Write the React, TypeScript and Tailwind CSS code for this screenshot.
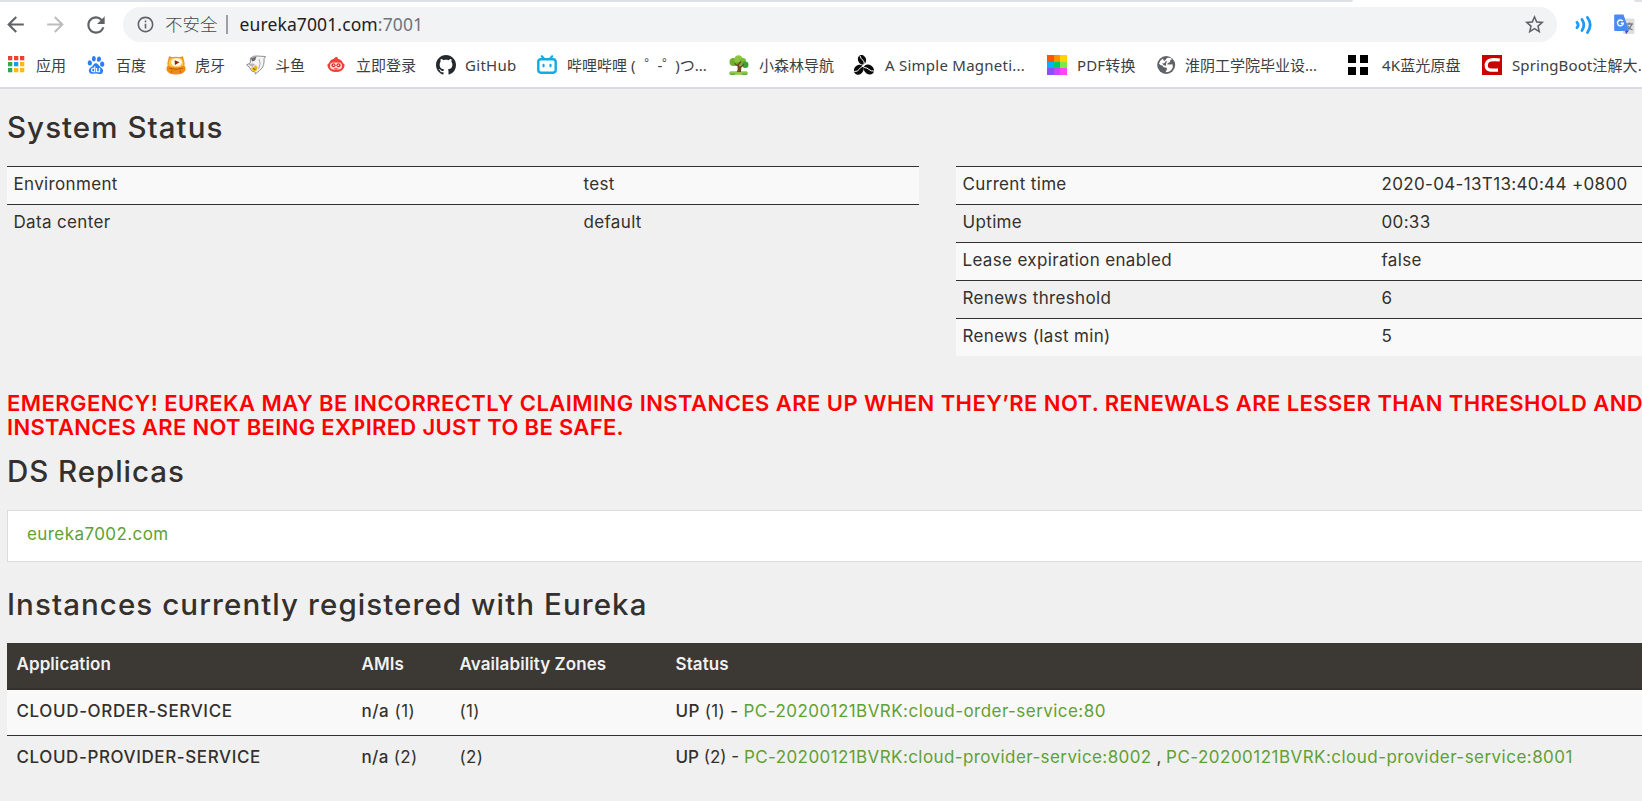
import type { ReactNode } from "react";
import { MdArrowBack, MdArrowForward, MdInfoOutline, MdRefresh, MdStarBorder } from "react-icons/md";
import { SiBaidu } from "react-icons/si";

const AppsIcon = () => (
  <svg viewBox="0 0 20 20" className="h-5 w-5">
    {[
      [2, 1, "#ea4335"], [8, 1, "#ea4335"], [14, 1, "#ea4335"],
      [2, 7, "#34a853"], [8, 7, "#2196f3"], [14, 7, "#fbbc05"],
      [2, 13, "#34a853"], [8, 13, "#fbbc05"], [14, 13, "#fbbc05"],
    ].map(([x, y, c]) => (
      <rect key={`${x}-${y}`} x={x} y={y} width="4.3" height="4.3" fill={c as string} />
    ))}
  </svg>
);

const TigerIcon = () => (
  <svg viewBox="0 0 20 20" className="h-5 w-5">
    <path d="M3 1.200 6.500 2.300Q10 1.400 13.500 2.300L17 1.200 17.800 5Q19 8 18.300 10.500 20.500 13 19 16 16.500 19.600 10 19.600T1 16Q-.5 13 1.700 10.500 1 8 2.200 5Z" fill="#f08c14" />
    <path d="M4 3.500Q10 1.800 16 3.500 18 7 17.500 10.500 14 12.600 10 12.600T2.500 10.500Q2 7 4 3.500Z" fill="#ffc34a" />
    <ellipse cx="10.500" cy="7.300" rx="5.500" ry="4" fill="#fff7ea" />
    <path d="M8.600 5.200 13.500 7.300 9 10Z" fill="#7a2f10" />
    <path d="M3 13.200Q10 15.500 17 13.200M5 17.800 6 15.500M15 17.800 14 15.500" stroke="#b85a0c" strokeWidth="1" fill="none" />
  </svg>
);

const SharkIcon = () => (
  <svg viewBox="0 0 20 20" className="h-5 w-5">
    <path d="M4.500 3Q7 .6 11 1L19.500 1.500Q17.500 3 18 7 17.800 12.500 13.500 15.500L9.500 19 9 16.800Q4 16.500 4.200 13L.6 9.800 4.300 8Z" fill="#f4f4f4" stroke="#828282" strokeWidth=".9" />
    <path d="M5 3.200 10.500 1.500 9 5.500 6 6.500Z" fill="#6d6570" />
    <path d="M2 9.700 6.500 8.300 9 9.500 6.500 12Z" fill="#b9b2bc" />
    <path d="M5 13Q8.500 12.500 9.800 9.800L11.500 12.500Q11.500 16 8.500 16.400 5.500 16 5 13Z" fill="#edb90c" />
    <path d="M7 13.500 9.500 14.500" stroke="#7c5a10" strokeWidth="1" />
    <path d="M13 4Q15.500 9 12.500 14" stroke="#9a9a9a" strokeWidth=".8" fill="none" />
  </svg>
);

const RobotIcon = () => (
  <svg viewBox="0 0 20 20" className="h-5 w-5">
    <path d="M7.500 3.900Q9 1.500 11.500 2 11 3 12.300 3.900 16 4.800 17 8.200 19.300 9 18.200 12 16.500 17 10 17T1.800 12Q.7 9 3 8.200 4 4.800 7.500 3.900Z" fill="#ef4136" />
    <rect x="4" y="7.600" width="12" height="6.800" rx="3.400" fill="#fbd9d5" />
    <circle cx="7.500" cy="10.300" r="2" fill="#d9372c" />
    <circle cx="12.500" cy="10.300" r="2" fill="#d9372c" />
    <circle cx="7.700" cy="10.300" r=".7" fill="#fff" />
    <circle cx="12.300" cy="10.300" r=".7" fill="#fff" />
    <path d="M8.300 13.700H11.700" stroke="#ef4136" />
  </svg>
);

const GithubIcon = () => (
  <svg viewBox="0 0 16 16" className="h-5 w-5" fill="#24292e">
    <path d="M8 0C3.580 0 0 3.580 0 8c0 3.540 2.290 6.530 5.470 7.590.4.070.55-.17.55-.38 0-.19-.01-.82-.01-1.490-2.010.37-2.530-.49-2.690-.94-.09-.23-.48-.94-.82-1.130-.28-.15-.68-.52-.01-.53.63-.01 1.080.58 1.230.82.72 1.210 1.870.87 2.330.66.070-.52.28-.87.51-1.070-1.780-.2-3.640-.89-3.640-3.950 0-.87.31-1.590.82-2.150-.08-.2-.36-1.020.08-2.120 0 0 .67-.21 2.200.82.64-.18 1.320-.27 2-.27.68 0 1.360.09 2 .27 1.530-1.040 2.200-.82 2.200-.82.44 1.100.16 1.920.08 2.120.51.56.82 1.270.82 2.150 0 3.070-1.870 3.750-3.650 3.950.29.25.54.73.54 1.480 0 1.070-.01 1.930-.01 2.200 0 .21.15.46.55.38A8.010 8.010 0 0 0 16 8c0-4.420-3.580-8-8-8z" />
  </svg>
);

const TvIcon = () => (
  <svg viewBox="0 0 20 20" className="h-5 w-5" fill="none" stroke="#0fabe4" strokeLinecap="round">
    <path d="M4.800 1.200 7.300 4M15.200 1.200 12.700 4" strokeWidth="2.100" />
    <rect x="1.300" y="4.300" width="17.400" height="13.400" rx="2.600" strokeWidth="2.400" />
    <path d="M6.500 9.800V11.300M13.500 9.800V11.300" strokeWidth="2.200" />
  </svg>
);

const TreeIcon = () => (
  <svg viewBox="0 0 20 20" className="h-5 w-5">
    <rect x=".3" y="16.300" width="18.500" height="3.400" rx="1.500" fill="#8ccb3f" />
    <path d="M1 19.200H6M13 19.200H18" stroke="#3f9a45" strokeWidth="1" />
    <circle cx="4.500" cy="7" r="4" fill="#6fb02c" />
    <circle cx="9.500" cy="4.500" r="4.200" fill="#8cc63f" />
    <circle cx="14" cy="6" r="3" fill="#79b935" />
    <circle cx="16.300" cy="9.800" r="3.200" fill="#3f9f3c" />
    <ellipse cx="9" cy="9" rx="4.200" ry="2" fill="#74ad30" />
    <path d="M7.800 17Q9.500 14 8.300 10L10.500 11.500 13.500 10.500Q11.500 13 12 17Z" fill="#7a4a25" />
    <path d="M9.500 15V8.500M9.500 11 5.500 8.500M10.500 12.500 15 9.500M9.800 9 12 6.500" stroke="#74421f" strokeWidth="1.200" fill="none" />
  </svg>
);

const BeansIcon = () => (
  <svg viewBox="0 0 20 20" className="h-5 w-5">
    <g fill="#0a0a0a">
      <ellipse cx="8" cy="4.700" rx="4" ry="4.900" transform="rotate(-20 8 4.700)" />
      <ellipse cx="4.800" cy="14.700" rx="5.400" ry="4.500" transform="rotate(-50 4.800 14.700)" />
      <ellipse cx="14.800" cy="14.500" rx="5.600" ry="4.500" transform="rotate(35 14.800 14.500)" />
    </g>
    <path d="M5.800.5Q7 4 8.800 5.200T10.200 9.500M.3 16.500Q4 16.500 5 14.500T9.200 11M10.200 12.500Q13 12.500 15 14.500T20 16" stroke="#fff" strokeWidth="1" fill="none" />
  </svg>
);

const PaletteIcon = () => (
  <svg viewBox="0 0 20 20" className="h-5 w-5" shapeRendering="crispEdges">
    {["#ff5500", "#ff9100", "#ffd400", "#00b4ff", "#00cc66", "#80e650", "#8a4dff", "#cc44ff", "#ff44ff"].map((c, i) => (
      <rect key={c} x={[0, 7, 13][i % 3]} y={[0, 7, 13][Math.floor(i / 3)]} width="7" height="7" fill={c} />
    ))}
  </svg>
);

const GlobeIcon = () => (
  <svg viewBox="0 0 20 20" className="h-5 w-5">
    <circle cx="9.200" cy="10" r="9" fill="#5f6368" />
    <path
      d="M10 3Q13 2.300 15 4 12.500 5.300 12.800 7.300 10 7.800 10.300 9.500 12.500 9.800 15.500 9.300 16.300 11.500 15 14 12.500 17.300 9 17.300 8.300 16 9.800 15 10.800 13.300 8.800 12.600 6 12.800 5.300 10.500 3.500 10.300 2 8.800 3 5.300 6 3.500 5.800 5.800 8 5.800 9 4.300 10 3Z"
      fill="#fff"
    />
    <path d="M5 8.300Q8 9 8.300 6.500L10.500 6.300Q8.300 8 9.300 10.800 6.500 11 5 8.300Z" fill="#5f6368" />
  </svg>
);

const SquaresIcon = () => (
  <svg viewBox="0 0 20 20" className="h-5 w-5" shapeRendering="crispEdges">
    <path d="M0 0H8V8H0ZM12 0H20V8H12ZM0 12H8V20H0ZM12 12H20V20H12Z" />
  </svg>
);

const RedCIcon = () => (
  <svg viewBox="0 0 20 20" className="h-5 w-5">
    <rect width="20" height="20" fill="#c90000" />
    <path d="M17.800 5Q13 4.300 9.500 4.800 4.500 5.700 4.200 10.300 4.200 15 9 15.200H16" stroke="#fff" strokeWidth="3.200" fill="none" />
  </svg>
);

type Bookmark = { id: string; label?: ReactNode; icon: ReactNode; width: string; gap?: string; track?: string };

const bookmarks: Bookmark[] = [
  { id: "应用", icon: <AppsIcon />, width: "w-[80px]" },
  { id: "百度", icon: <SiBaidu className="mx-[1px] h-[18px] w-[18px] text-[#2f7df6]" />, width: "w-[80px]" },
  { id: "虎牙", icon: <TigerIcon />, width: "w-[80px]", gap: "gap-[9px]" },
  { id: "斗鱼", icon: <SharkIcon />, width: "w-[80px]", gap: "gap-[9px]" },
  { id: "立即登录", icon: <RobotIcon />, width: "w-[110px]" },
  { id: "GitHub", icon: <GithubIcon />, width: "w-[101px]", gap: "gap-[9px]", track: "tracking-[0.3px]" },
  {
    id: "哔哩哔哩",
    label: (
      <>
        哔哩哔哩 (<span className="pl-[9px] tracking-[-2px]">゜- ゜</span>)つ...
      </>
    ),
    icon: <TvIcon />,
    width: "w-[192px]",
  },
  { id: "小森林导航", icon: <TreeIcon />, width: "w-[125px]" },
  { id: "A Simple Magneti...", icon: <BeansIcon />, width: "w-[193px]", gap: "gap-[11px]", track: "tracking-[0.25px]" },
  { id: "PDF转换", icon: <PaletteIcon />, width: "w-[110px]", track: "tracking-[0.15px]" },
  { id: "淮阴工学院毕业设...", icon: <GlobeIcon />, width: "w-[191px]", gap: "gap-[8px]" },
  { id: "4K蓝光原盘", icon: <SquaresIcon />, width: "w-[134px]", gap: "gap-[14px]", track: "tracking-[0.15px]" },
  { id: "SpringBoot注解大...", icon: <RedCIcon />, width: "w-[180px]", track: "tracking-[0.1px]" },
];

function Toolbar() {
  return (
    <div className="flex h-[35px] items-center pl-[3px]">
      <MdArrowBack className="h-[25px] w-[25px] shrink-0 text-[#5f6368]" />
      <MdArrowForward className="ml-[15px] h-[25px] w-[25px] shrink-0 text-[#bbbdbf]" />
      <MdRefresh className="ml-[15px] h-[26px] w-[26px] shrink-0 text-[#5f6368]" />
      <div className="ml-[14px] flex h-[35px] w-[1434px] shrink-0 items-center rounded-full bg-[#f1f3f4] pr-[11px] pl-[13px] text-[17.5px]">
        <MdInfoOutline className="h-[19px] w-[19px] text-[#5f6368]" />
        <span className="ml-[10px] font-light text-[#45494d]">不安全</span>
        <span className="ml-[8px] h-[19px] w-[2px] bg-[#9aa0a6]" />
        <span className="ml-[12px] tracking-[0.12px] text-[#202124]">
          eureka7001.com<span className="text-[#70757a]">:7001</span>
        </span>
        <MdStarBorder className="ml-auto h-[23px] w-[23px] text-[#5f6368]" />
      </div>
      <svg viewBox="0 0 18 18" className="ml-[18px] h-[18px] w-[18px] shrink-0" fill="none" stroke="#1a9bff" strokeWidth="2.800" strokeLinecap="round">
        <path d="M2 6.300Q4.300 9 2 11.700M7 3.500Q10.600 9 7 14.500M12.500 1.500Q17.800 9 12.500 16.500" />
      </svg>
      <svg viewBox="0 0 21 21" className="ml-[21px] h-[21px] w-[21px] shrink-0">
        <rect x="9" y="4.500" width="11.500" height="15.500" rx="1" fill="#dedede" />
        <path d="M12 10H19M15.500 8.500V10M17.800 10Q16.500 14.500 12.500 16M13.500 11.500Q15.500 15 18.500 16" stroke="#6f7f88" strokeWidth="1.300" fill="none" />
        <path d="M11 16.500H15L12 20Z" fill="#3346c4" />
        <path d="M1 .5H9.500L15 17H1Q.2 17 .2 16V1.300Q.2.500 1 .5Z" fill="#4a8af4" />
        <path d="M8.800 7.200A2.900 2.900 0 1 0 9.300 9.300H6.800" stroke="#fff" strokeWidth="1.400" fill="none" />
      </svg>
    </div>
  );
}

function StatusTable({ rows, labelWidth, className }: { rows: [string, string][]; labelWidth: string; className: string }) {
  return (
    <div className={className}>
      {rows.map(([k, v]) => (
        <div key={k} className="flex h-[38px] border-t border-[#34302d] pt-[4px] pl-[6.5px] leading-[26px] odd:bg-[#f9f9f9]">
          <span className={labelWidth}>{k}</span>
          <span>{v}</span>
        </div>
      ))}
    </div>
  );
}

const Heading = ({ children, className }: { children: ReactNode; className: string }) => (
  <h1 className={`text-[29.5px] leading-[32px] font-[450] whitespace-nowrap ${className}`}>{children}</h1>
);

const Link = ({ children, track = "tracking-[0.42px]" }: { children: ReactNode; track?: string }) => (
  <a className={`text-[#5fa134] ${track}`}>{children}</a>
);

const columns = "grid grid-cols-[345px_98px_216px_1fr] pl-[9.5px] whitespace-nowrap";

export default function App() {
  return (
    <div className="h-[801px] w-[1642px] overflow-hidden bg-[#f0f0f0] font-['Inter','Noto_Sans_CJK_SC',sans-serif] text-[17px] tracking-[0.34px] text-[#34302d]">
      <header className="h-[89px] border-b-2 border-[#d9dbe0] bg-white font-['Noto_Sans','Noto_Sans_CJK_SC',sans-serif] tracking-normal">
        <div className="mb-[5px] flex h-[2px] justify-between">
          <div className="w-[1353px] rounded-br-[3px] bg-[#dee1e6]" />
          <div className="w-[8px] rounded-bl-[3px] bg-[#dee1e6]" />
        </div>
        <Toolbar />
        <nav className="flex h-[45px] items-center pl-[6px] text-[15px] text-[#3c4043]">
          {bookmarks.map((b) => (
            <div key={b.id} className={`flex shrink-0 items-center whitespace-nowrap ${b.gap ?? "gap-[10px]"} ${b.width}`}>
              {b.icon}
              <span className={`pt-[1px] ${b.track ?? ""}`}>{b.label ?? b.id}</span>
            </div>
          ))}
        </nav>
      </header>

      <main className="ml-[7px]">
        <Heading className="pt-[22px] tracking-[1.05px]">System Status</Heading>
        <div className="mt-[23px] flex h-[190px] gap-[37px]">
          <StatusTable
            className="w-[912px] shrink-0"
            labelWidth="w-[570px]"
            rows={[["Environment", "test"], ["Data center", "default"]]}
          />
          <StatusTable
            className="w-[912px] shrink-0"
            labelWidth="w-[419px]"
            rows={[
              ["Current time", "2020-04-13T13:40:44 +0800"],
              ["Uptime", "00:33"],
              ["Lease expiration enabled", "false"],
              ["Renews threshold", "6"],
              ["Renews (last min)", "5"],
            ]}
          />
        </div>
        <h4 className="mt-[35px] text-[22px] leading-[24px] font-semibold tracking-[0.44px] whitespace-nowrap text-[#ff0000]">
          EMERGENCY! EUREKA MAY BE INCORRECTLY CLAIMING INSTANCES ARE UP WHEN THEY’RE NOT. RENEWALS ARE LESSER THAN THRESHOLD AND
          <br />
          <span className="tracking-[0.32px]">INSTANCES ARE NOT BEING EXPIRED JUST TO BE SAFE.</span>
        </h4>
        <Heading className="mt-[16px] tracking-[0.95px]">DS Replicas</Heading>
        <div className="mt-[23px] h-[52px] border border-r-0 border-[#dddddd] bg-white pt-[10px] pl-[19px] leading-[26px]">
          <Link>eureka7002.com</Link>
        </div>
        <Heading className="mt-[26px] tracking-[1.08px]">Instances currently registered with Eureka</Heading>
        <div className="mt-[23px]">
          <div className={`${columns} h-[47px] border-b-2 border-[#34302d] bg-[#3c3833] pt-[8px] leading-[26px] font-semibold tracking-[0.08px] text-[#f1f1f1]`}>
            <span>Application</span>
            <span>AMIs</span>
            <span>Availability Zones</span>
            <span>Status</span>
          </div>
          <div className={`${columns} h-[46px] border-b border-[#34302d] bg-[#f9f9f9] pt-[8px] leading-[26px]`}>
            <b className="font-medium tracking-[0.63px]">CLOUD-ORDER-SERVICE</b>
            <span className="tracking-[0.5px]"><b className="font-medium">n/a</b> (1)</span>
            <span>(1)</span>
            <span><b className="font-medium">UP</b> (1) - <Link track="tracking-[0.45px]">PC-20200121BVRK:cloud-order-service:80</Link></span>
          </div>
          <div className={`${columns} h-[46px] pt-[8px] leading-[26px]`}>
            <b className="font-medium tracking-[0.6px]">CLOUD-PROVIDER-SERVICE</b>
            <span><b className="font-medium">n/a</b> (2)</span>
            <span>(2)</span>
            <span className="tracking-normal">
              <b className="font-medium">UP</b> (2) - <Link track="tracking-[0.41px]">PC-20200121BVRK:cloud-provider-service:8002</Link> ,{" "}
              <Link track="tracking-[0.47px]">PC-20200121BVRK:cloud-provider-service:8001</Link>
            </span>
          </div>
        </div>
      </main>
    </div>
  );
}
